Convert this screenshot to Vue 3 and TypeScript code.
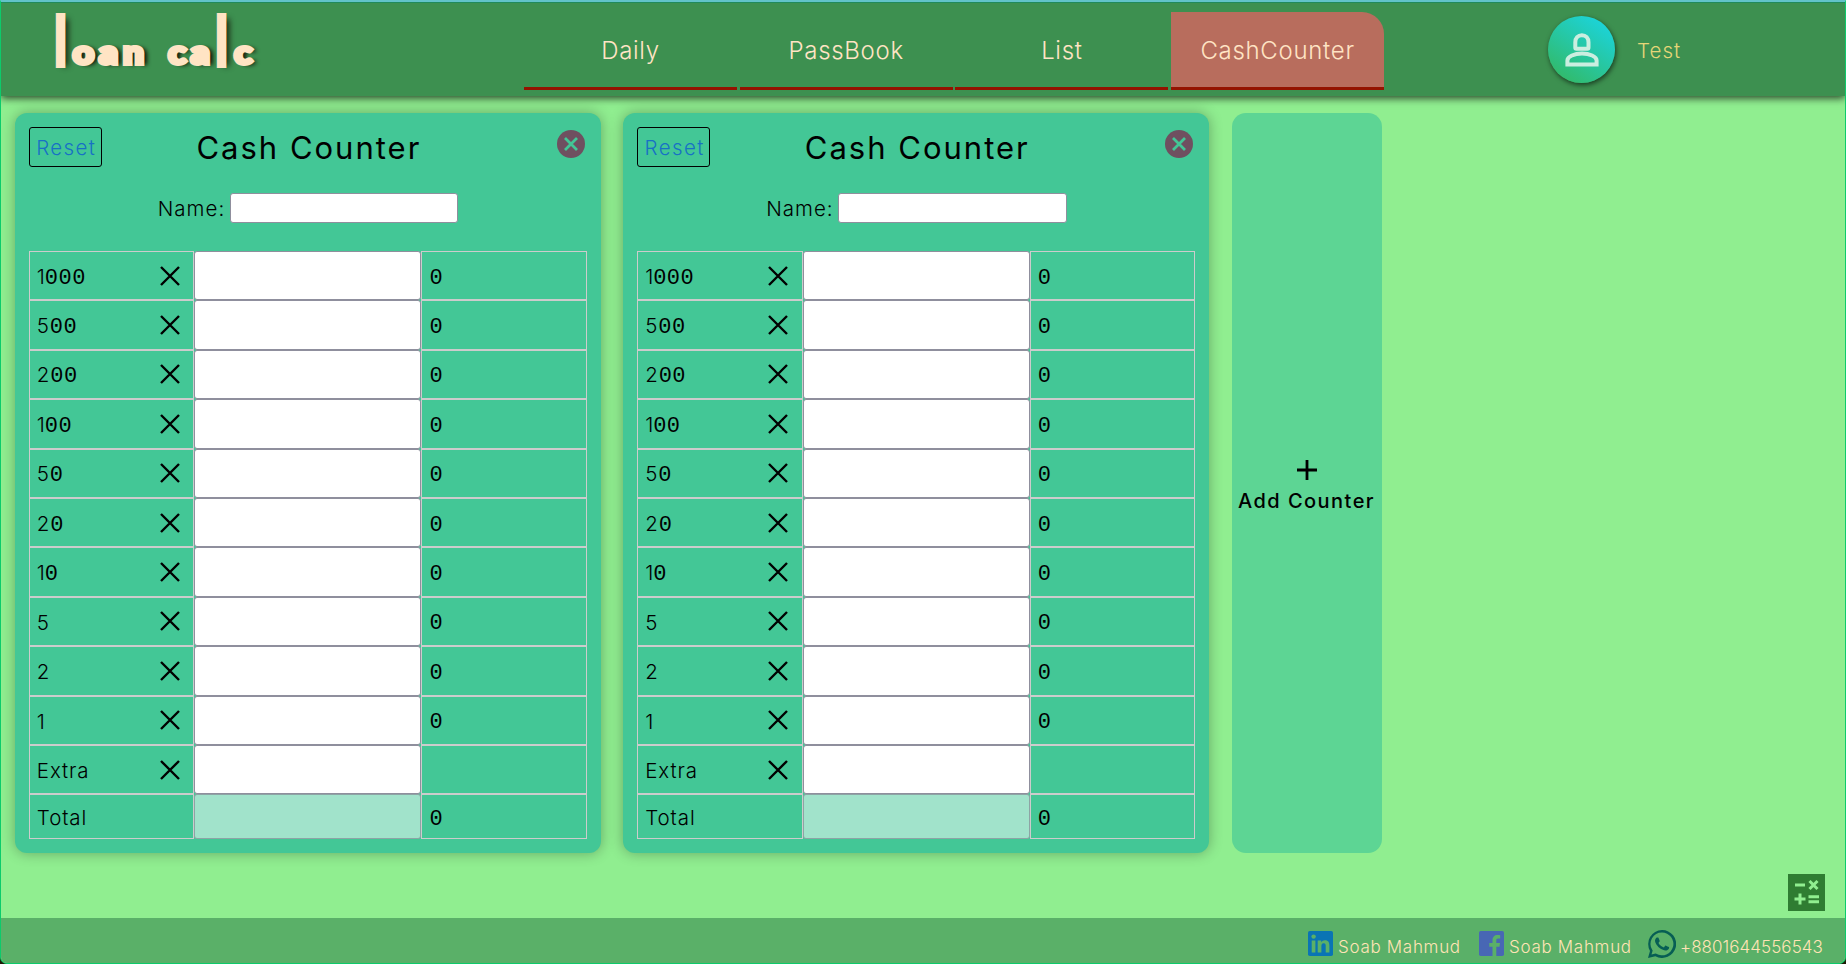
<script setup lang="ts">
import { ref } from 'vue'

interface Row { label: string; multiply: boolean; result: string }

const tabs: string[] = ['Daily', 'PassBook', 'List', 'CashCounter']
const active = ref<string>('CashCounter')
const notes: string[] = ['1000', '500', '200', '100', '50', '20', '10', '5', '2', '1']
const rows: Row[] = [
  ...notes.map((label) => ({ label, multiply: true, result: '0' })),
  { label: 'Extra', multiply: true, result: '' },
  { label: 'Total', multiply: false, result: '0' },
]
const counters = ref<number[]>([1, 2])
const logo: string[] = ['loan', 'calc']

function addCounter(): void {
  counters.value.push(Math.max(0, ...counters.value) + 1)
}
function removeCounter(id: number): void {
  counters.value = counters.value.filter((c) => c !== id)
}
</script>

<template>
  <div class="page">
    <header class="header">
      <div class="logo">
        <span v-for="word in logo" :key="word" :class="['word', word]"><span v-for="(ch, i) in word" :key="i" :class="['glyph', { tall: ch === 'l' }]">{{ ch }}</span></span>
      </div>
      <nav class="nav">
        <a v-for="tab in tabs" :key="tab" :class="['tab', tab.toLowerCase(), { active: tab === active }]" @click="active = tab"><span>{{ tab }}</span></a>
      </nav>
      <div class="user">
        <div class="avatar">
          <svg width="34" height="34" viewBox="0 0 34 34" fill="none" stroke="currentColor" stroke-width="4">
            <path d="M10.3 14.5V9.2C10.3 5.2 13 2.2 16.9 2.2s6.6 3 6.6 7v5.3q0 1.2-1.2 1.2H11.5q-1.2 0-1.2-1.2Z" />
            <path d="M2.4 31.5v-4c0-4 7-6.9 14.6-6.9s14.6 2.9 14.6 6.9v4Z" />
          </svg>
        </div>
        <span class="username">Test</span>
      </div>
    </header>

    <main class="main">
      <section v-for="id in counters" :key="id" class="card">
        <div class="card-head">
          <button class="reset"><span>Reset</span></button>
          <h2 class="title">Cash Counter</h2>
          <svg class="close" viewBox="0 0 28 28" @click="removeCounter(id)">
            <circle cx="14" cy="14" r="14" fill="#6f5060" />
            <path d="M8 8l12 12M20 8L8 20" stroke="#43c796" stroke-width="2.8" />
          </svg>
        </div>
        <div class="name-row">
          <label class="name">Name:</label>
          <input class="name-input" type="text" />
        </div>
        <div class="table">
          <div v-for="row in rows" :key="row.label" :class="['row', { total: !row.multiply }]">
            <div class="cell">
              <span class="label"><span v-for="(ch, i) in row.label" :key="i" :class="{ zero: ch === '0', one: ch === '1' }">{{ ch }}</span></span>
              <svg v-if="row.multiply" class="times" viewBox="0 0 20 20"><path d="M1 1l18 18M19 1L1 19" stroke="#000" stroke-width="2.4" /></svg>
            </div>
            <input class="count" type="text" :disabled="!row.multiply" />
            <div class="cell"><span class="zero">{{ row.result }}</span></div>
          </div>
        </div>
      </section>
      <button class="add" @click="addCounter">
        <svg width="20" height="20" viewBox="0 0 20 20"><path d="M10 0v20M0 10h20" stroke="#000" stroke-width="2.8" /></svg>
        <span>Add Counter</span>
      </button>
    </main>

    <svg class="calculator" viewBox="0 0 37 37">
      <path fill="#2f7d32" d="M0 0h37v37H0z" />
      <path d="M7 11h10M21.500 7l8 8M29.500 7l-8 8M6.500 25h11M12 19.500v11M20.500 22.700h10.500M20.500 27.700h10.500" stroke="#90ee90" stroke-width="3" />
    </svg>

    <footer class="footer">
      <a class="contact">
        <svg class="social" viewBox="0 0 25 25">
          <rect width="25" height="25" rx="1.800" fill="#0a74b4" />
          <g fill="#5ab068"><circle cx="5.600" cy="5.600" r="2.200" /><path d="M3.700 9.500h3.700v12H3.700zM9.700 9.500h3.500v1.700c.7-1.200 2-2 3.700-2 3.700 0 4.500 2.400 4.500 5.600v6.700h-3.700v-6c0-1.400 0-3.200-2-3.200s-2.300 1.500-2.300 3.100v6.100H9.700z" /></g>
        </svg>
        <span class="person">Soab Mahmud</span>
      </a>
      <a class="contact">
        <svg class="social" viewBox="0 0 25 25">
          <rect width="25" height="25" rx="1.800" fill="#4867b4" />
          <path fill="#5ab068" d="M13.500 25v-9.300h-3.200V12h3.200V9.200C13.500 6 15.400 4 18.500 4c1.400 0 2.500.1 2.700.2v3.300h-2c-1.600 0-1.900.8-1.900 1.900V12h3.700l-.5 3.700h-3.200V25z" />
        </svg>
        <span class="person">Soab Mahmud</span>
      </a>
      <a class="contact">
        <svg class="whatsapp" viewBox="0 0 24 24" fill="#075e54">
          <path d="M17.472 14.382c-.297-.149-1.758-.867-2.030-.967-.273-.099-.471-.148-.670.150-.197.297-.767.966-.940 1.164-.173.199-.347.223-.644.075-.297-.150-1.255-.463-2.390-1.475-.883-.788-1.480-1.761-1.653-2.059-.173-.297-.018-.458.130-.606.134-.133.298-.347.446-.520.149-.174.198-.298.298-.497.099-.198.050-.371-.025-.520-.075-.149-.669-1.612-.916-2.207-.242-.579-.487-.500-.669-.510-.173-.008-.371-.010-.570-.010-.198 0-.520.074-.792.372-.272.297-1.040 1.016-1.040 2.479 0 1.462 1.065 2.875 1.213 3.074.149.198 2.096 3.200 5.077 4.487.709.306 1.262.489 1.694.625.712.227 1.360.195 1.871.118.571-.085 1.758-.719 2.006-1.413.248-.694.248-1.289.173-1.413-.074-.124-.272-.198-.570-.347M12 2.100a9.800 9.800 0 0 0-8.300 15l.3.500-1 3.500 3.600-1 .5.300A9.800 9.800 0 1 0 12 2.100M12 0a12 12 0 1 1-5.700 22.500L0 24l1.700-6.100A12 12 0 0 1 12 0" />
        </svg>
        <span class="phone">+8801644556543</span>
      </a>
    </footer>
  </div>
</template>

<style>
body { margin: 0; background: #1d1a05; }
</style>

<style scoped>
* { box-sizing: border-box; }
.page {
  position: relative;
  display: flex;
  flex-direction: column;
  height: 964px;
  background: #90ee90;
  border: 1px solid #0ccb6b;
  border-top: 2px solid #62c3c9;
  border-radius: 0 0 7px 7px;
  overflow: hidden;
  font-family: Inter, Roboto, "Liberation Sans", sans-serif;
  font-weight: 300;
  color: #000;
}
.header {
  position: relative;
  display: flex;
  height: 94px;
  flex: none;
  background: #3d9050;
  border-top: 1px solid #218a5b;
  box-shadow: 0 2px 8px rgba(0, 0, 0, .75);
}
.logo {
  display: flex;
  gap: 20px;
  width: 523px;
  padding: 29px 0 0 49px;
  font: 900 32px/40px Lato, "Open Sans", sans-serif;
  color: #ffe4c4;
  -webkit-text-stroke: 4px #ffe4c4;
  text-shadow: 4px 1px 4px #120600;
}
.word { display: flex; }
.glyph { width: 25px; height: 40px; text-align: center; transform: scaleX(1.150); }
.calc .glyph { width: 22.500px; }
.word .tall {
  width: 21px;
  transform: scale(1.120, 1.950);
  transform-origin: 50% 32px;
}
.nav { display: flex; gap: 2.700px; padding-top: 9px; }
.tab {
  display: flex;
  align-items: center;
  justify-content: center;
  width: 213px;
  height: 78px;
  padding-top: 2px;
  border-bottom: 3px solid #941300;
  font-size: 24px;
  letter-spacing: .7px;
  color: #ffe4c4;
}
.active { background: #b86d5d; border-top-right-radius: 22px; }
.user { display: flex; align-items: flex-start; padding: 13px 0 0 164px; }
.avatar {
  display: flex;
  align-items: center;
  justify-content: center;
  width: 67px;
  height: 67px;
  border-radius: 50%;
  background: linear-gradient(35deg, #33b965 8%, #1bd4dc 90%);
  box-shadow: 1px 2px 5px rgba(0, 0, 0, .6);
  color: #cbeee0;
}
.username { margin-left: 22px; line-height: 70px; font-size: 20.500px; color: #e6d678; letter-spacing: 1px; }

.main { display: flex; align-items: flex-start; gap: 22.200px; padding: 17px 0 0 13.800px; }
.card {
  width: 586.200px;
  height: 740px;
  padding: 14px;
  border-radius: 12px;
  background: #43c796;
  box-shadow: 0 0 14px rgba(0, 0, 0, .3);
}
.card-head { position: relative; display: flex; height: 40px; }
.reset {
  width: 73px;
  height: 40px;
  padding: 1px 0 0 2px;
  border: 1px solid #000;
  border-radius: 3px;
  background: transparent;
  font: inherit;
  font-size: 20.500px;
  letter-spacing: 1.400px;
  color: #1771c5;
}
.title {
  flex: 1;
  margin: 0 71px 0 0;
  padding-top: 1px;
  text-align: center;
  font-size: 31px;
  line-height: 40px;
  font-weight: 400;
  letter-spacing: 2px;
}
.close { position: absolute; right: 2px; top: 3px; width: 28px; height: 28px; }
.name-row { display: flex; align-items: center; height: 30px; margin: 26px 0 28px 129px; }
.name { width: 72px; font-size: 20.500px; letter-spacing: 1px; }
.name-input { width: 228.500px; height: 30px; border: 1px solid #8f8f9d; border-radius: 3px; background: #fff; }
.table { margin-top: 27.500px; }
.row { display: flex; height: 49.400px; }
.row.total { height: 44.500px; }
.cell {
  display: flex;
  align-items: center;
  justify-content: space-between;
  width: 165.500px;
  padding: 0 13.500px 0 7px;
  border: 1px solid #ccc;
  font-size: 20.500px;
}
.cell .label { padding-top: 3px; line-height: 26px; letter-spacing: .9px; }
.cell > .zero { padding-top: 6px; line-height: 26px; }
.count { width: 227.200px; height: 100%; margin: 0; border: 1px solid #8f8f9d; border-radius: 3px; background: #fff; }
.count:disabled { background: rgba(255, 255, 255, .5); border-color: rgba(130, 130, 145, .65); }
.zero { display: inline-block; width: 13.700px; font-family: "Liberation Mono", monospace; font-size: 22px; line-height: 24px; letter-spacing: 0; }
.one { display: inline-block; width: 8px; }
.times { width: 20px; height: 20px; }
.add {
  display: flex;
  flex-direction: column;
  align-items: center;
  justify-content: center;
  gap: 8px;
  width: 150px;
  height: 740px;
  padding: 7px 0 0;
  border: 0;
  border-radius: 14px;
  background: #5dd594;
  font: 500 20px/26px Inter, Roboto, sans-serif;
  letter-spacing: 1.450px;
  white-space: nowrap;
  color: #000;
}
.calculator { position: absolute; right: 20px; bottom: 52px; width: 37px; height: 37px; }
.footer {
  display: flex;
  align-items: flex-start;
  justify-content: flex-end;
  height: 45px;
  margin-top: auto;
  padding: 12px 22px 0 0;
  background: #5ab068;
  color: #ffe4b5;
  font-size: 17px;
}
.contact { display: flex; }
.contact span { line-height: 34px; white-space: nowrap; }
.social { width: 25px; height: 25px; margin: 1px 5px 0 0; }
.person { width: 141px; letter-spacing: .7px; }
.whatsapp { width: 28px; height: 28px; margin: 0 4px 0 -2px; }
.phone { width: 143px; letter-spacing: .05px; }
</style>
